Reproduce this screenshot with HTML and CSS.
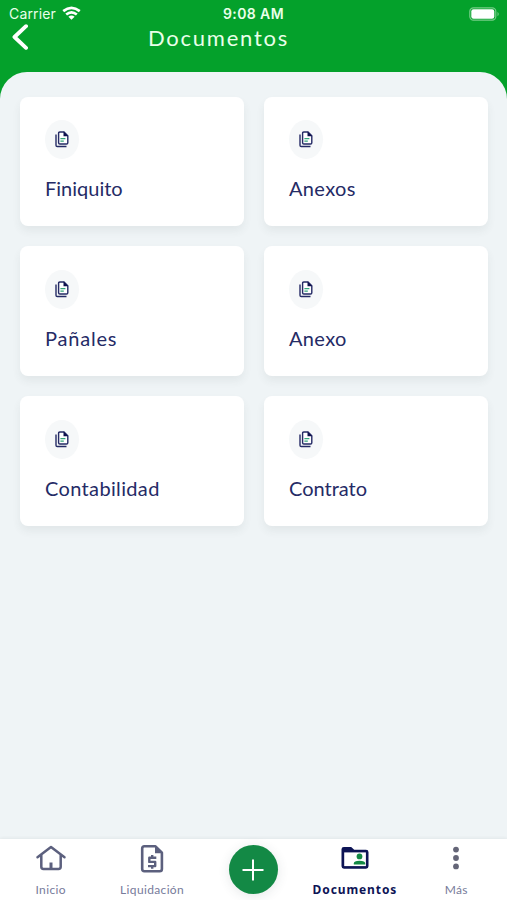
FILE: index.html
```html
<!DOCTYPE html>
<html lang="es">
<head>
<meta charset="utf-8">
<title>Documentos</title>
<link rel="stylesheet" href="styles.css">
</head>
<body>
<svg class="defs" width="0" height="0" aria-hidden="true">
  <symbol id="docs" viewBox="0 0 14 17">
    <path d="M3.6 2.2Q3.6 1 4.8 1H9L12.8 4.8V11.8Q12.8 13 11.6 13H4.8Q3.6 13 3.6 11.8Z" fill="#fff" stroke="#252b66" stroke-width="1.4"/>
    <path d="M8.5.5V5.3H13.2Z" fill="#10124f"/>
    <path d="M1 3.5V14.2Q1 15.5 2.2 15.5H11.5" fill="none" stroke="#252b66" stroke-width="1.4"/>
    <path d="M5.4 7.6H10.4M5.4 10.1H8.8" stroke="#35a77b" stroke-width="1.3"/>
  </symbol>
</svg>
<div class="screen">
  <header class="header">
    <div class="status">
      <div class="carrier"><span>Carrier</span>
        <svg width="19" height="15" viewBox="0 0 20 15" fill="none" stroke="#fff" stroke-width="2.8"><path d="M1.3 5Q10-2.1 18.7 5M4.4 8.6Q10 4 15.6 8.6"/><path d="M6.7 11Q10 8.4 13.3 11L10 14.2Z" fill="#fff" stroke="none"/></svg>
      </div>
      <span class="time">9:08 AM</span>
      <svg class="battery" width="31" height="14" viewBox="0 0 31 14"><rect x=".8" y=".8" width="26" height="12.4" rx="3.6" fill="none" stroke="#75cd88" stroke-width="1.2"/><rect x="2.3" y="2.3" width="23" height="9.4" rx="2.2" fill="#fff"/><path d="M28.5 4.7Q31 7 28.5 9.3Z" fill="#75cd88"/></svg>
    </div>
    <div class="titlebar">
      <svg class="back" width="16" height="26" viewBox="0 0 16 26"><path d="M14 2.2L2.5 13L14 23.8" fill="none" stroke="#fff" stroke-width="3.9" stroke-linecap="round" stroke-linejoin="round"/></svg>
      <h1>Documentos</h1>
    </div>
  </header>
  <main class="grid">
    <article class="card"><div class="badge"><svg width="14" height="17"><use href="#docs"/></svg></div><h2 class="tight">Finiquito</h2></article>
    <article class="card"><div class="badge"><svg width="14" height="17"><use href="#docs"/></svg></div><h2>Anexos</h2></article>
    <article class="card"><div class="badge"><svg width="14" height="17"><use href="#docs"/></svg></div><h2 class="loose">Pañales</h2></article>
    <article class="card"><div class="badge"><svg width="14" height="17"><use href="#docs"/></svg></div><h2>Anexo</h2></article>
    <article class="card"><div class="badge"><svg width="14" height="17"><use href="#docs"/></svg></div><h2>Contabilidad</h2></article>
    <article class="card"><div class="badge"><svg width="14" height="17"><use href="#docs"/></svg></div><h2 class="tight">Contrato</h2></article>
  </main>
  <nav class="nav">
    <a class="item"><svg width="32" height="30" viewBox="0 0 32 30" fill="none" stroke="#5c607e" stroke-width="2.5" stroke-linecap="round" stroke-linejoin="round"><path d="M2.5 13.2L16 3L29.5 13.2M6.3 11V22.8Q6.3 25 8.5 25H23.5Q25.7 25 25.7 22.8V11"/><path d="M16 18.5V24.5" stroke-width="3" stroke-linecap="butt"/></svg><span>Inicio</span></a>
    <a class="item"><svg width="24" height="30" viewBox="0 0 24 30" fill="none" stroke="#5c607e" stroke-width="2.6" stroke-linejoin="round"><path d="M2.2 4.4Q2.2 2.3 4.3 2.3H15.5L21.9 8.7V25Q21.9 27.2 19.7 27.2H4.3Q2.2 27.2 2.2 25Z"/><path d="M15 2V9.2H22Z" fill="#5c607e" stroke="none"/><path d="M16.3 13.8H9.3V17.9H15.2V22.1H8M12.2 11V14M12.2 22V24.8" stroke-width="2.4"/></svg><span>Liquidación</span></a>
    <a class="add"><svg width="22" height="22" viewBox="0 0 22 22"><path d="M11 .5V21.5M.5 11H21.5" stroke="#fff" stroke-width="2"/></svg></a>
    <a class="item active"><svg width="30" height="30" viewBox="0 0 30 30"><path d="M1.5 5.3Q1.5 2.9 3.9 2.9H11.2L14.2 5.8H26Q28.5 5.8 28.5 8.2V22.3Q28.5 24.7 26 24.7H4Q1.5 24.7 1.5 22.3Z" fill="#0d1455"/><rect x="4.2" y="8.4" width="21.7" height="13.7" fill="#fff"/><circle cx="19.5" cy="12.4" r="2.9" fill="#138945"/><path d="M13.8 20.6V19.4Q13.8 16.7 19.5 16.7Q25.2 16.7 25.2 19.4V20.6Z" fill="#138945"/></svg><span>Documentos</span></a>
    <a class="item"><svg width="8" height="30" viewBox="0 0 8 30" fill="#646577"><circle cx="4" cy="5.6" r="2.9"/><circle cx="4" cy="14" r="2.9"/><circle cx="4" cy="22.4" r="2.9"/></svg><span>Más</span></a>
  </nav>
</div>
</body>
</html>
```
FILE: styles.css
```css
* { box-sizing: border-box; }
body { margin: 0; font-family: Lato, "Open Sans", sans-serif; color: #252b66; }
.defs { display: block; height: 0; }
.screen { height: 900px; display: flex; flex-direction: column; background: linear-gradient(#04a12b 0 110px, #eff4f6 110px); }
.header { height: 72px; flex: none; color: #e9ffe9; }
.status { height: 24px; display: grid; grid-template-columns: 1fr auto 1fr; align-items: center; padding: 3px 7px 0 9px; font: 14px Inter, sans-serif; }
.carrier { display: flex; align-items: center; gap: 6px; letter-spacing: .15px; }
.time { font-weight: 600; font-size: 14px; letter-spacing: .4px; margin-left: -2px; }
.battery { justify-self: end; }
.titlebar { display: grid; grid-template-columns: 136px 1fr; padding-left: 12px; height: 30px; }
.back { align-self: start; }
h1 { margin: 0; font: 400 22px/28px Lato, sans-serif; letter-spacing: 1.75px; }
.grid { flex: 1; display: grid; grid-template-columns: 1fr 1fr; grid-template-rows: 129px 130px 130px; column-gap: 20px; row-gap: 20px; padding: 25px 19px 0 20px; background: #eff4f6; border-radius: 27px 27px 0 0; }
.card { background: #fff; border-radius: 8px; padding: 0 25px 19px; box-shadow: 0 5px 8px rgba(50, 65, 75, .07); display: flex; flex-direction: column; justify-content: flex-end; }
.badge { width: 34px; height: 39px; border-radius: 50%; background: #f6f8f9; display: grid; place-items: center; margin-bottom: 10px; }
.badge svg { display: block; }
h2 { margin: 0; font-weight: 400; font-size: 20px; line-height: 38px; letter-spacing: .35px; white-space: nowrap; }
h2.tight { letter-spacing: 0; }
h2.loose { letter-spacing: .8px; }
.nav { height: 61px; flex: none; display: grid; grid-template-columns: repeat(5, 1fr); background: #fff; box-shadow: 0 -1px 3px rgba(50, 65, 75, .07); }
.item { display: flex; flex-direction: column; align-items: center; padding-top: 5px; font-size: 12px; line-height: 16px; color: #777b9b; }
.item svg { display: block; }
.item span { margin-top: 8px; letter-spacing: .35px; }
.active { color: #0d1455; font-weight: 700; }
.active span { font-family: "Noto Sans", sans-serif; letter-spacing: .9px; }
.add { width: 49px; height: 49px; border-radius: 50%; background: #138945; display: grid; place-items: center; justify-self: center; margin-top: 6px; box-shadow: 0 2px 12px rgba(50, 65, 75, .12); }
```
